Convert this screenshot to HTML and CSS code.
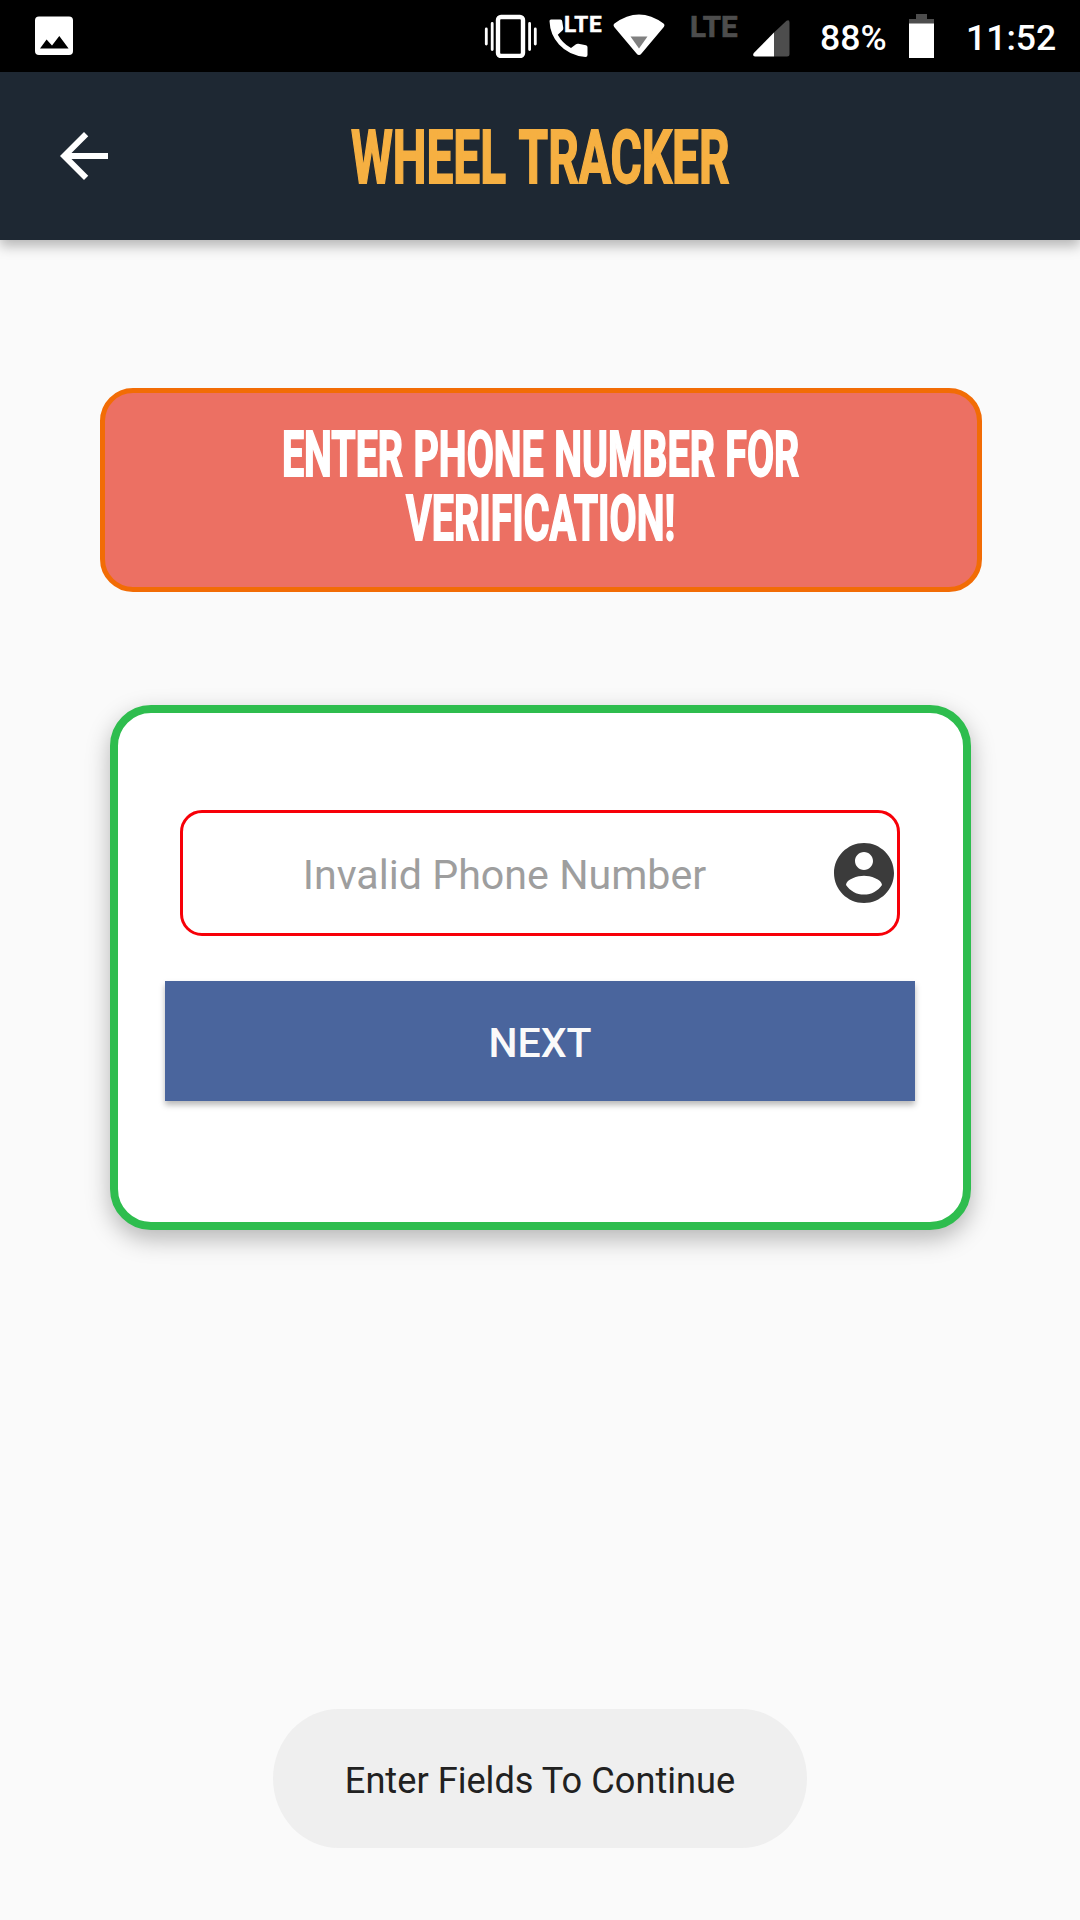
FILE: index.html
```html
<!DOCTYPE html>
<html lang="en">
<head>
<meta charset="utf-8">
<title>Wheel Tracker</title>
<link rel="stylesheet" href="styles.css">
</head>
<body>
<div class="screen">
  <header class="status-bar">
    <svg class="icon-photo" width="40" height="40" viewBox="0 0 40 40">
      <rect x="1" y="0.5" width="38" height="38.5" rx="4" fill="#fff"/>
      <path d="M6 32.5 12.6 23.5 18 29.5 25.3 20 34.6 32.5z" fill="#000"/>
    </svg>
    <div class="status-icons">
      <svg width="54" height="44" viewBox="0 0 54 44" fill="none" stroke="#fff">
        <rect x="14" y="3" width="25" height="39" rx="3" stroke-width="4.4"/>
        <path d="M2.3 15v15M8.2 9.500v26M45.600 9.500v26M51.300 15v15" stroke-width="2.800" stroke-linecap="round"/>
      </svg>
      <div class="call">
        <svg width="40" height="44" viewBox="0 0 40 44">
          <path d="M2 5.500H11.500Q13 5.500 13.200 7.300L14.300 14Q14.400 15.500 13.400 16.500L8.800 20.800Q13.500 29.500 22 34.100L27 30.300Q28 29.500 29.500 29.800L37 31.300Q38.500 31.700 38.500 33.300V41Q38.500 43 36.500 43Q20 41.500 10 30.500Q1 20.500 0.500 7Q0.500 5.500 2 5.500z" fill="#fff"/>
        </svg>
        <span class="call-lte">LTE</span>
      </div>
      <svg class="icon-wifi" width="52" height="42" viewBox="0 0 52 42">
        <path d="M1.500 9.500Q26-8.500 50.500 9.500Q52.200 11 50.800 13L28.500 39.500Q26 42.500 23.500 39.500L1.200 13Q-.2 11 1.500 9.500z" fill="#fff"/>
        <path d="M17.500 22.500H34.500L26 34.500z" fill="#808080"/>
      </svg>
      <span class="network">LTE</span>
      <svg class="icon-signal" width="37" height="37" viewBox="0 0 37 37">
        <path d="M21 12.500 33.500.8Q36.500-.8 36.500 2.500V34Q36.500 36.500 34 36.500H21z" fill="#4d4d4d"/>
        <path d="M21 12.500V36.500H2Q-1 36 .8 33z" fill="#fff"/>
      </svg>
      <span class="status-text battery-level">88%</span>
      <svg class="icon-battery" width="25" height="44" viewBox="0 0 25 44">
        <path d="M7 0H18V5H25V10H0V5H7z" fill="#4d4d4d"/>
        <path d="M0 9.500H25V44H0z" fill="#fff"/>
      </svg>
      <span class="status-text clock">11:52</span>
    </div>
  </header>

  <div class="app-bar">
    <svg class="icon-back" width="48" height="48" viewBox="4 4 16 16">
      <path d="M20 11H7.830l5.590-5.590L12 4l-8 8 8 8 1.410-1.410L7.830 13H20v-2z" fill="#fff"/>
    </svg>
    <h1 class="title">WHEEL TRACKER</h1>
  </div>

  <main class="content">
    <section class="banner">
      <h2 class="prompt">ENTER PHONE NUMBER FOR<br>VERIFICATION!</h2>
    </section>

    <section class="card">
      <div class="field">
        <span class="hint">Invalid Phone Number</span>
        <svg width="60" height="60" viewBox="2 2 20 20">
          <path d="M12 2C6.480 2 2 6.480 2 12s4.480 10 10 10 10-4.480 10-10S17.520 2 12 2zm0 3c1.660 0 3 1.340 3 3s-1.340 3-3 3-3-1.340-3-3 1.340-3 3-3zm0 14.200c-2.500 0-4.710-1.280-6-3.220.030-1.990 4-3.080 6-3.080 1.990 0 5.970 1.090 6 3.080-1.290 1.940-3.500 3.220-6 3.220z" fill="#3b3b3b"/>
        </svg>
      </div>
      <button class="next">NEXT</button>
    </section>
  </main>

  <div class="toast">Enter Fields To Continue</div>
</div>
</body>
</html>
```

FILE: styles.css
```css
* {
  box-sizing: border-box;
}

body {
  margin: 0;
  font-family: Roboto, sans-serif;
}

svg {
  display: block;
  flex: none;
}

.screen {
  display: flex;
  flex-direction: column;
  align-items: center;
  width: 1080px;
  height: 1920px;
  background: #fafafa;
}

.status-bar {
  display: flex;
  justify-content: space-between;
  align-items: flex-start;
  width: 100%;
  height: 72px;
  padding: 14px 23px 0 34px;
  background: #000;
}

.icon-photo {
  margin-top: 2px;
}

.status-icons {
  display: flex;
  align-items: flex-start;
}

.call {
  position: relative;
  width: 56px;
  margin-left: 11px;
}

.call-lte {
  position: absolute;
  top: -3px;
  left: 15px;
  color: #fff;
  font-size: 22.5px;
  font-weight: 700;
  letter-spacing: 0.7px;
  line-height: 26px;
  -webkit-text-stroke: 0.5px #fff;
}

.icon-wifi {
  margin-left: 8px;
}

.network {
  width: 50px;
  margin: -4px 0 0 25px;
  color: #4d4d4d;
  font-size: 29.5px;
  font-weight: 700;
  line-height: 34px;
  -webkit-text-stroke: 0.7px #4d4d4d;
}

.icon-signal {
  margin: 6px 0 0 13px;
}

.status-text {
  color: #fff;
  font-size: 35.600px;
  font-weight: 500;
  line-height: 48px;
  white-space: nowrap;
}

.battery-level {
  width: 68px;
  margin-left: 30px;
}

.icon-battery {
  margin-left: 21px;
}

.clock {
  width: 91px;
  margin-left: 32px;
}

.app-bar {
  display: grid;
  grid-template-columns: 1fr auto 1fr;
  align-items: center;
  width: 100%;
  height: 168px;
  padding: 0 60px;
  background: #1e2833;
  box-shadow: 0 6px 12px rgba(0, 0, 0, 0.28);
}

.title,
.prompt {
  margin: 0;
  font-weight: 700;
  text-align: center;
  white-space: nowrap;
}

.title {
  padding-top: 2px;
  color: #f6b042;
  font-size: 75px;
  line-height: 88px;
  word-spacing: 3px;
  transform: scaleX(0.637);
  -webkit-text-stroke: 1.800px #f6b042;
}

.prompt {
  color: #fff;
  font-size: 62.500px;
  line-height: 64px;
  word-spacing: 1px;
  transform: scaleX(0.63);
  -webkit-text-stroke: 1.800px #fff;
}

.content {
  display: flex;
  flex-direction: column;
  align-items: center;
  gap: 113px;
  padding-top: 148px;
}

.banner {
  display: flex;
  justify-content: center;
  width: 882px;
  height: 204px;
  margin-left: 2px;
  padding-top: 30px;
  background: #ec7063;
  border: 5px solid #f26c05;
  border-radius: 33px;
}

.card {
  display: flex;
  flex-direction: column;
  align-items: center;
  gap: 45px;
  width: 861px;
  height: 525px;
  padding-top: 97px;
  background: #fff;
  border: 8px solid #2ebd4e;
  border-radius: 41px;
  box-shadow: 0 9px 24px rgba(0, 0, 0, 0.28);
}

.field {
  display: flex;
  align-items: center;
  width: 720px;
  height: 126px;
  padding-right: 3px;
  border: 3px solid #f70008;
  border-radius: 22px;
}

.hint {
  flex: 1;
  padding: 3px 8px 0 0;
  color: #9e9e9e;
  font-size: 41.200px;
  text-align: center;
  white-space: nowrap;
}

.next {
  width: 750px;
  height: 120px;
  padding: 3px 0 0;
  color: #fafafa;
  background: #4a659d;
  border: 0;
  box-shadow: 0 4px 6px rgba(0, 0, 0, 0.28);
  font-family: Roboto, sans-serif;
  font-size: 41px;
  font-weight: 500;
}

.toast {
  width: 534px;
  height: 139px;
  margin-top: 479px;
  color: #212121;
  background: #efefef;
  border-radius: 66px / 69.500px;
  font-size: 36.200px;
  line-height: 144px;
  text-align: center;
  white-space: nowrap;
}
```
